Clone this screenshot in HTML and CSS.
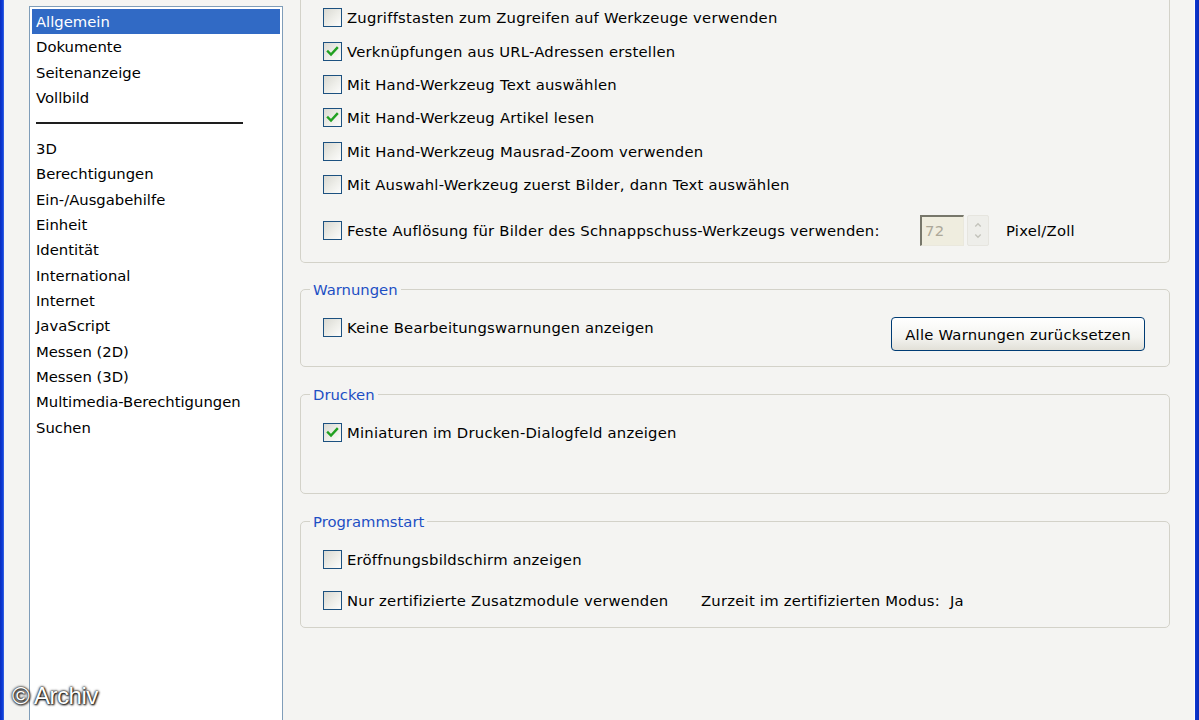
FILE: index.html
```html
<!DOCTYPE html>
<html lang="de">
<head>
<meta charset="utf-8">
<title>Voreinstellungen – Allgemein</title>
<link rel="stylesheet" href="styles.css">
</head>
<body>
<div class="window">
  <div class="frame frame-left"></div>

  <aside class="sidebar">
    <ul class="list">
      <li class="item selected">Allgemein</li>
      <li class="item">Dokumente</li>
      <li class="item">Seitenanzeige</li>
      <li class="item">Vollbild</li>
      <li class="sep"><span></span></li>
      <li class="item">3D</li>
      <li class="item">Berechtigungen</li>
      <li class="item">Ein-/Ausgabehilfe</li>
      <li class="item">Einheit</li>
      <li class="item">Identität</li>
      <li class="item">International</li>
      <li class="item">Internet</li>
      <li class="item">JavaScript</li>
      <li class="item">Messen (2D)</li>
      <li class="item">Messen (3D)</li>
      <li class="item">Multimedia-Berechtigungen</li>
      <li class="item">Suchen</li>
    </ul>
  </aside>

  <main class="main">
    <section class="group group-top">
      <div class="body body-top">
        <div class="row"><span class="cb"></span><span class="label">Zugriffstasten zum Zugreifen auf Werkzeuge verwenden</span></div>
        <div class="row"><span class="cb"><svg viewBox="0 0 17 17" class="check"><polyline points="4,8.5 7,11.5 13,5"/></svg></span><span class="label">Verknüpfungen aus URL-Adressen erstellen</span></div>
        <div class="row"><span class="cb"></span><span class="label">Mit Hand-Werkzeug Text auswählen</span></div>
        <div class="row"><span class="cb"><svg viewBox="0 0 17 17" class="check"><polyline points="4,8.5 7,11.5 13,5"/></svg></span><span class="label">Mit Hand-Werkzeug Artikel lesen</span></div>
        <div class="row"><span class="cb"></span><span class="label">Mit Hand-Werkzeug Mausrad-Zoom verwenden</span></div>
        <div class="row"><span class="cb"></span><span class="label">Mit Auswahl-Werkzeug zuerst Bilder, dann Text auswählen</span></div>
        <div class="row row-spin">
          <span class="cb"></span>
          <span class="label label-fixed">Feste Auflösung für Bilder des Schnappschuss-Werkzeugs verwenden:</span>
          <span class="spin-input">72</span>
          <span class="spin-buttons">
            <svg viewBox="0 0 22 31" class="spin-arrows"><polyline points="8,11 11,8 14,11"/><polyline points="8,20 11,23 14,20"/></svg>
          </span>
          <span class="unit">Pixel/Zoll</span>
        </div>
      </div>
    </section>

    <section class="group group-warn">
      <div class="title">Warnungen</div>
      <div class="body body-warn">
        <div class="row row-first"><span class="cb"></span><span class="label">Keine Bearbeitungswarnungen anzeigen</span></div>
        <button class="button" type="button">Alle Warnungen zurücksetzen</button>
      </div>
    </section>

    <section class="group group-print">
      <div class="title">Drucken</div>
      <div class="body">
        <div class="row row-first"><span class="cb"><svg viewBox="0 0 17 17" class="check"><polyline points="4,8.5 7,11.5 13,5"/></svg></span><span class="label">Miniaturen im Drucken-Dialogfeld anzeigen</span></div>
      </div>
    </section>

    <section class="group group-start">
      <div class="title">Programmstart</div>
      <div class="body">
        <div class="row row-first"><span class="cb"></span><span class="label">Eröffnungsbildschirm anzeigen</span></div>
        <div class="row row-second">
          <span class="cb"></span>
          <span class="label label-cert">Nur zertifizierte Zusatzmodule verwenden</span>
          <span class="label label-mode">Zurzeit im zertifizierten Modus:</span>
          <span class="label">Ja</span>
        </div>
      </div>
    </section>
  </main>

  <div class="frame frame-right"></div>

  <div class="watermark">© Archiv</div>
</div>
</body>
</html>
```

FILE: styles.css
```css
* {
  box-sizing: border-box;
}

html,
body {
  margin: 0;
  padding: 0;
}

body {
  font-family: "DejaVu Sans", "Noto Sans", sans-serif;
  font-size: 14.8px;
  color: #000;
  background: #f4f4f2;
}

.window {
  position: relative;
  display: flex;
  width: 1199px;
  height: 720px;
  overflow: hidden;
  background: #f4f4f2;
}

.frame {
  flex: none;
}

.frame-left {
  width: 4px;
  background: linear-gradient(to right, #0a2ebd, #0b3bd9 60%, #3f6ae0);
}

.frame-right {
  width: 5px;
  background: linear-gradient(to right, #fdfdfd 0, #fdfdfd 1px, #0b36d0 1px, #0a2cb8);
}

/* ---------- sidebar list ---------- */

.sidebar {
  flex: none;
  width: 279px;
  padding: 6px 0 0 25px;
}

.list {
  margin: 0;
  padding: 2px;
  list-style: none;
  width: 254px;
  height: 740px;
  background: #fff;
  border: 1px solid #7f9db9;
}

.item {
  height: 25.36px;
  line-height: 25px;
  padding-left: 4px;
  white-space: nowrap;
}

.selected {
  background: #316ac5;
  color: #fff;
}

.sep {
  height: 25.36px;
  display: flex;
  align-items: center;
  padding-left: 4px;
}

.sep span {
  display: block;
  width: 207px;
  height: 2px;
  background: #1e1e1e;
}

/* ---------- main panel ---------- */

.main {
  flex: none;
  width: 911px;
  padding: 0 24px 0 17px;
  letter-spacing: 0.22px;
}

.group {
  border: 1px solid #d3d2c9;
  border-radius: 5px;
  margin-top: 27px;
}

.group-top {
  margin-top: 0;
  height: 263px;
  border-top: none;
  border-radius: 0 0 5px 5px;
}

.group-warn {
  margin-top: 26px;
  height: 78px;
}

.group-print {
  height: 100px;
}

.group-start {
  height: 107px;
}

.title {
  width: fit-content;
  height: 20px;
  line-height: 22px;
  margin: -11px 0 0 9px;
  padding: 0 3px;
  background: #f4f4f2;
  color: #1d4fc4;
  letter-spacing: 0;
}

.body {
  padding-left: 22px;
}

.body-top {
  padding-top: 1px;
}

.row {
  display: flex;
  align-items: center;
  height: 33.4px;
  white-space: nowrap;
}

.row-first {
  height: 34px;
  margin-top: 11px;
}

.row-second {
  height: 34px;
  margin-top: 7px;
}

.row-spin {
  margin-top: 12px;
}

.body-warn {
  display: flex;
  justify-content: space-between;
  align-items: flex-start;
  padding-right: 24px;
}

/* ---------- checkbox ---------- */

.cb {
  flex: none;
  width: 19px;
  height: 19px;
  margin-right: 5px;
  border: 1px solid #1c5180;
  background: linear-gradient(135deg, #d9d9d2 0%, #eeeee9 55%, #fcfcfb 100%);
  display: flex;
  align-items: center;
  justify-content: center;
}

.check {
  width: 17px;
  height: 17px;
}

.check polyline {
  fill: none;
  stroke: #21a121;
  stroke-width: 2.4;
  stroke-linecap: square;
}

.label-fixed {
  flex: none;
  width: 573px;
}

.label-cert {
  flex: none;
  width: 354px;
}

.label-mode {
  flex: none;
  width: 249px;
}

/* ---------- spin box ---------- */

.spin-input {
  flex: none;
  width: 44px;
  height: 31px;
  line-height: 27px;
  padding-left: 3px;
  color: #aca899;
  background: #efeddf;
  border-top: 2px solid #77776b;
  border-left: 2px solid #77776b;
  border-right: 1px solid #eae8dd;
  border-bottom: 1px solid #eae8dd;
}

.spin-buttons {
  flex: none;
  width: 22px;
  height: 31px;
  margin-left: 3px;
  background: #eeeeea;
  border: 1px solid #e6e5df;
  border-radius: 2px;
}

.spin-arrows {
  display: block;
  width: 20px;
  height: 29px;
}

.spin-arrows polyline {
  fill: none;
  stroke: #c3c3bb;
  stroke-width: 1.5;
}

.unit {
  margin-left: 17px;
}

/* ---------- button ---------- */

.button {
  flex: none;
  width: 254px;
  height: 34px;
  margin-top: 18px;
  padding: 0;
  font-family: inherit;
  font-size: inherit;
  letter-spacing: inherit;
  color: #000;
  border: 1px solid #003c74;
  border-radius: 4px;
  background: linear-gradient(to bottom, #ffffff 0%, #f4f4f0 60%, #e2e0d8 100%);
}

/* ---------- watermark ---------- */

.watermark {
  position: absolute;
  left: 12px;
  bottom: 10px;
  font-family: "Liberation Sans", Arial, sans-serif;
  font-size: 24px;
  color: #fff;
  letter-spacing: -0.5px;
  text-shadow: 0 0 2px #000, 0 0 3px #222, 1px 1px 2px #111;
}
```
